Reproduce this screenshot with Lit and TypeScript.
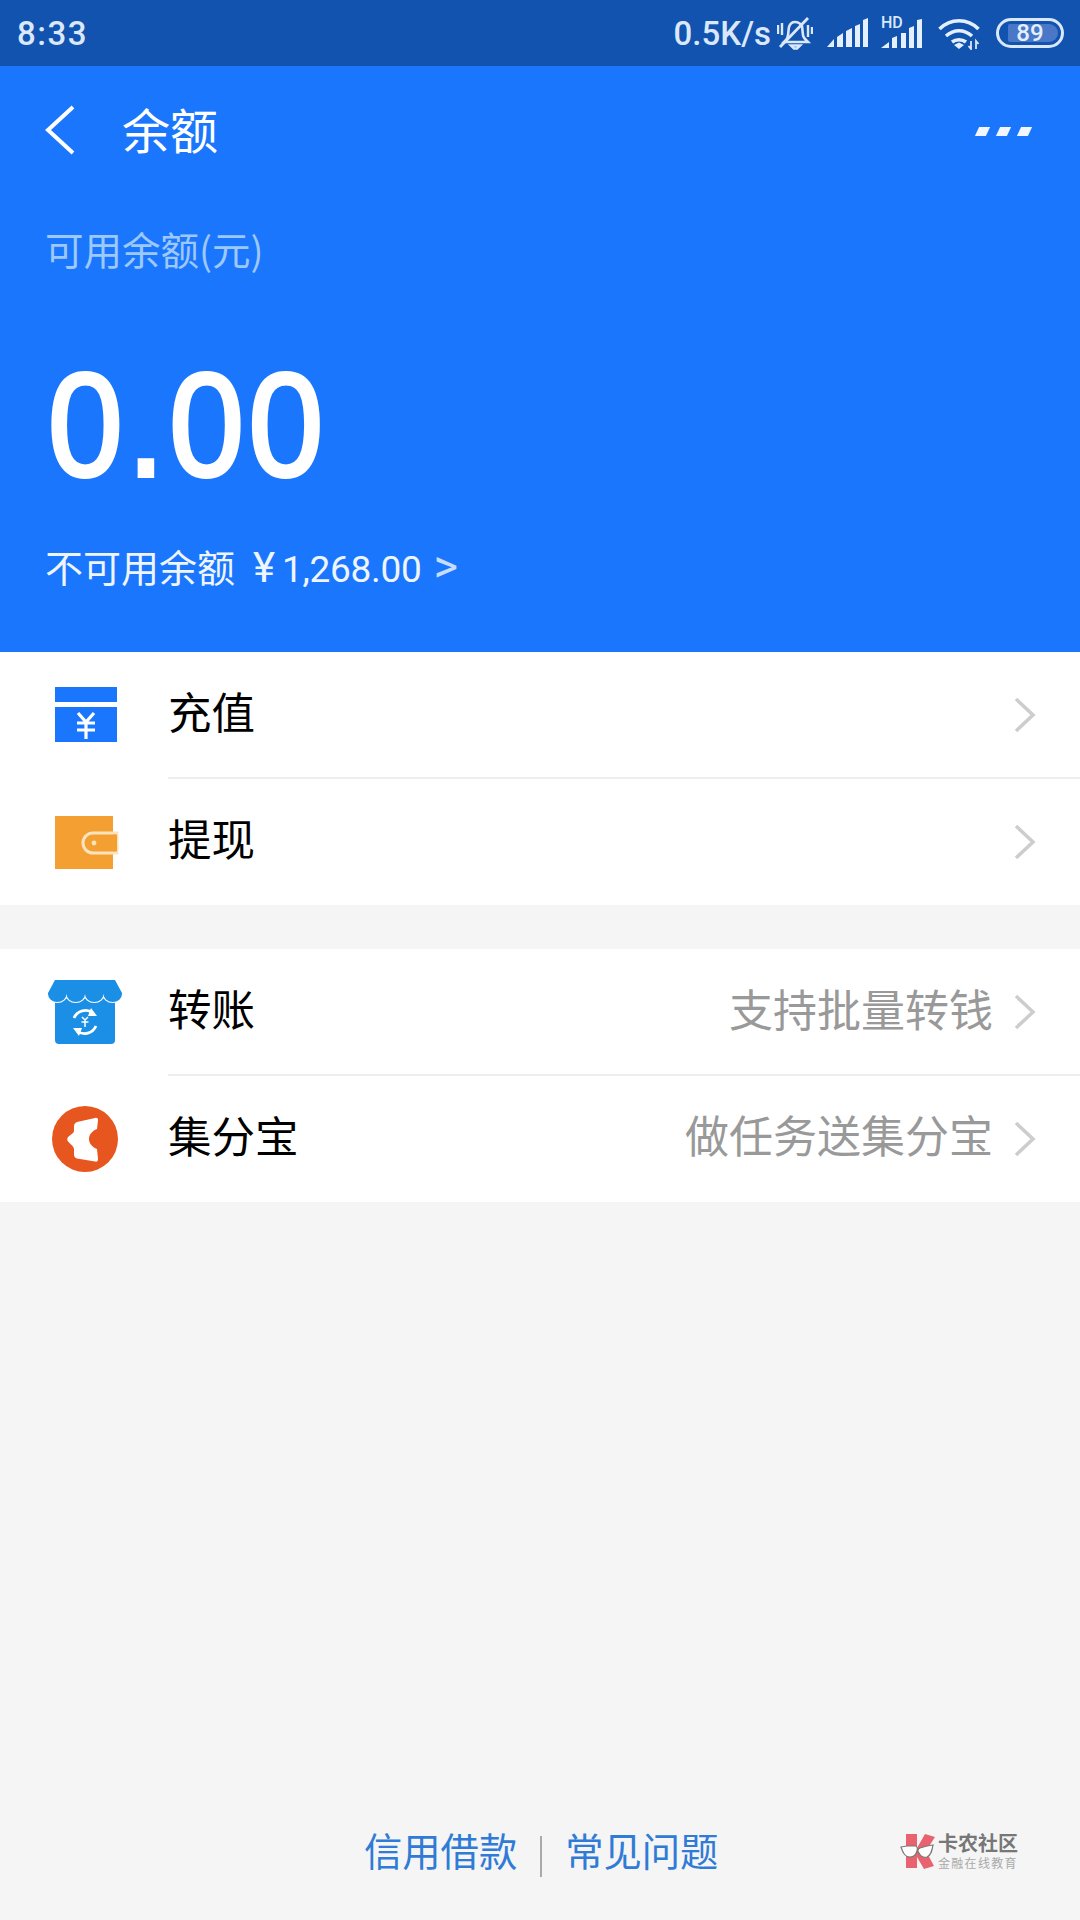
import { LitElement, css, html, nothing, svg } from 'lit'
import { customElement } from 'lit/decorators.js'

interface Row {
   icon: unknown
   label: string
   hint?: string
}

const chargeIcon = svg`
   <rect x="10" y="12" width="62" height="15" fill="#1a76fc"/>
   <rect x="10" y="32" width="62" height="35" fill="#1a76fc"/>
   <path d="M33 38l8 9 8-9M32 48h18M32 55h18M41 47v17" fill="none" stroke="#fff" stroke-width="3.2"/>
`

const walletIcon = svg`
   <rect x="10" y="14" width="58" height="53" fill="#f39f32"/>
   <path d="M72 31H48a9 9 0 0 0 0 20h24z" fill="#f39f32" stroke="#fde3bd" stroke-width="3"/>
   <rect x="68" y="32.5" width="4" height="17" fill="#f39f32"/>
   <circle cx="49" cy="41" r="2.4" fill="#fde3bd"/>
`

const shopIcon = svg`
   <rect x="10" y="22" width="60" height="50" rx="4" fill="#1b8fe6"/>
   <path d="M10 8h60l7 13v1a9.250 8 0 0 1-18.500 0 9.250 8 0 0 1-18.500 0 9.250 8 0 0 1-18.500 0 9.250 8 0 0 1-18.500 0v-1z" fill="#1b8fe6" stroke="#fff" stroke-width="2.200" paint-order="stroke"/>
   <path d="M29 46a12.500 12.500 0 0 1 19-5M51 54a12.500 12.500 0 0 1-19 5" fill="none" stroke="#fff" stroke-width="2.800"/>
   <path d="M46 36l6 8-9 0zM34 64l-6-8 9 0z" fill="#fff"/>
   <path d="M37 45l3 3 3-3M36.500 50h7M40 48v7" fill="none" stroke="#fff" stroke-width="1.500"/>
`

const pointsIcon = svg`
   <circle cx="40" cy="40" r="33" fill="#e6561e"/>
   <path d="M50 19c2-.5 3 .5 3 2l-1 9c-5 2-8 6-8 10s3 8 8 10l1 10c0 2-1 3-3 2.500l-18-3c-2-.5-3-2-3-4v-5c0-2-1-3-3-5l-3-3c-1-1.500-1-3 0-4.500l5-4c1-1 1-2 1-4v-3c0-2 1-3 3-4z" fill="#fff"/>
`

const groupA: Row[] = [
   { icon: chargeIcon, label: '充值' },
   { icon: walletIcon, label: '提现' }
]

const groupB: Row[] = [
   { icon: shopIcon, label: '转账', hint: '支持批量转钱' },
   { icon: pointsIcon, label: '集分宝', hint: '做任务送集分宝' }
]

const genRow = (row: Row) => html`
   <div class="row">
      <svg class="row-icon" viewBox="0 0 80 80" width="80" height="80">${row.icon}</svg>
      <div class="row-body">
         <span class="label">${row.label}</span>
         ${row.hint ? html`<span class="hint">${row.hint}</span>` : nothing}
         <svg class="chevron" viewBox="0 0 24 38" width="24" height="38">
            <path d="M3 3l17 16L3 35" fill="none" stroke="#cdcdcd" stroke-width="3.500"/>
         </svg>
      </div>
   </div>
`

@customElement('app-root')
export class AppRoot extends LitElement {

   render() {
      return html`
         <div class="page">
            <div class="status">
               <span class="time">8:33</span>
               <span class="speed">0.5K/s</span>
               <svg class="bell" viewBox="0 0 36 34" width="36" height="34">
                  <path d="M9 24c3-3 2-9 3-13 1-3 3-5 6-5 3 0 5 1 7 4l1 9c0 2 2 4 3 5l2 2H7zM14 29.500h9l-3 3h-3z" fill="none" stroke="#dbe8fb" stroke-width="2.600"/>
                  <path d="M3 31L31 2" stroke="#dbe8fb" stroke-width="2.800"/>
                  <path d="M1 9v9M5 7v12M31 9v12M35 11v7" stroke="#dbe8fb" stroke-width="2.400"/>
               </svg>
               <svg class="signal" viewBox="0 0 41 30" width="41" height="30">
                  <path d="M0 29l7-8v8zM10 29V19l6-4v14zM19 29V13l6-3v19zM28 29V8l5-2v23zM36 29V2l5-2v29z" fill="#e4efff"/>
               </svg>
               <div class="hd">
                  <span class="hd-label">HD</span>
                  <svg viewBox="0 0 41 30" width="41" height="30">
                     <path d="M0 29l8-6v6zM11 29V19l5-2v12zM20 29V14h5v15zM28 29V9l5-2v22zM36 29V1l5-1v29z" fill="#e4efff"/>
                  </svg>
               </div>
               <svg class="wifi" viewBox="0 0 42 34" width="42" height="34">
                  <path d="M1.500 13c11-11 28-11 39 0M8 20c8-7 18-7 26 0M14 26c4-3 10-3 14 0" fill="none" stroke="#e4efff" stroke-width="3.600"/>
                  <path d="M16 29l5-2.500 5 2.500-5 4z" fill="#e4efff"/>
                  <path d="M33 25v8l-2.500-3M38 33v-8l2.500 3" fill="none" stroke="#dbe8fb" stroke-width="1.800"/>
               </svg>
               <div class="battery">
                  <div class="battery-fill"></div>
                  <span class="battery-text">89</span>
               </div>
            </div>
            <div class="hero">
               <div class="bar">
                  <svg class="back" viewBox="0 0 30 50" width="30" height="50">
                     <path d="M28 2L3 25l25 23" fill="none" stroke="#fff" stroke-width="4"/>
                  </svg>
                  <span class="title">余额</span>
                  <div class="more"><i></i><i></i><i></i></div>
               </div>
               <div class="caption">可用余额(元)</div>
               <div class="amount">0.00</div>
               <div class="frozen">不可用余额<span class="yen">¥</span><span class="money">1,268.00</span><span class="gt">&gt;</span></div>
            </div>
            <div class="group">${groupA.map(genRow)}</div>
            <div class="group">${groupB.map(genRow)}</div>
            <div class="footer">
               <span class="link">信用借款</span>
               <span class="sep"></span>
               <span class="link">常见问题</span>
               <div class="logo">
                  <svg viewBox="0 0 36 38" width="36" height="38">
                     <path d="M7 2h11v14l8-14 10 3-9 14 8 15-10 3-7-12v11H7z" fill="#e8636f"/>
                     <path d="M2 15l6-1h8c2 0 3 2 2 5-1 4-3 6-7 6-5 0-7-4-9-10zM34 13l-6 1-7 2c-2 1-3 3-1 5 2 4 4 5 8 4 4-2 5-6 6-12z" fill="#fff" stroke="#777" stroke-width="1.200"/>
                  </svg>
                  <div class="logo-text">
                     <span class="logo-name">卡农社区</span>
                     <span class="logo-sub">金融在线教育</span>
                  </div>
               </div>
            </div>
         </div>
      `
   }

   static styles = css`
      :host {
         display: block;
         font-family: "Noto Sans CJK SC", sans-serif;
      }
      .page {
         display: flex;
         flex-direction: column;
         height: 1920px;
         background: #f5f5f5;
      }
      .status {
         display: flex;
         align-items: center;
         height: 66px;
         padding-left: 17px;
         background: #1153ae;
         color: #dbe8fb;
         font-family: Roboto, sans-serif;
         font-size: 33px;
         font-weight: 500;
      }
      .time {
         letter-spacing: 1.500px;
      }
      .speed {
         margin-left: auto;
      }
      .bell {
         margin-left: 6px;
      }
      .signal {
         margin-left: 14px;
      }
      .hd {
         position: relative;
         margin-left: 13px;
         height: 30px;
      }
      .hd-label {
         position: absolute;
         left: 0;
         top: -2px;
         font-size: 16px;
         line-height: 14px;
         font-weight: 500;
      }
      .wifi {
         margin-left: 16px;
      }
      .battery {
         position: relative;
         box-sizing: border-box;
         width: 68px;
         height: 30px;
         margin: 0 16px 0 16px;
         border: 3px solid #dbe8fb;
         border-radius: 15px;
      }
      .battery-fill {
         position: absolute;
         left: 9px;
         top: 3px;
         width: 50px;
         height: 18px;
         background: #4a78c8;
         border-radius: 2px 9px 9px 2px;
      }
      .battery-text {
         position: absolute;
         left: 0;
         right: 0;
         top: 0;
         text-align: center;
         font-size: 24px;
         line-height: 24px;
         color: #e4efff;
      }
      .hero {
         padding: 0 0 61px 45px;
         background: #1a76fc;
         color: #fff;
      }
      .bar {
         display: flex;
         align-items: center;
         height: 128px;
         padding-right: 50px;
      }
      .back {
         display: block;
      }
      .title {
         margin: 0 0 5px 47px;
         font-size: 48px;
      }
      .more {
         display: flex;
         gap: 10px;
         margin-left: auto;
         margin-top: 3px;
      }
      .more i {
         width: 11px;
         height: 9px;
         background: #f2f7ff;
         transform: skewX(-25deg);
      }
      .caption {
         margin-top: 29px;
         font-size: 38.500px;
         line-height: 50px;
         color: #9cc8fb;
      }
      .amount {
         margin: 68px 0 0 3px;
         font-family: "Liberation Sans", sans-serif;
         font-size: 146px;
         line-height: 170px;
         letter-spacing: 5px;
         -webkit-text-stroke: 4px #fff;
         transform: scaleX(0.92);
         transform-origin: left center;
      }
      .frozen {
         margin-top: 30px;
         font-size: 38px;
         line-height: 50px;
         color: #eef5ff;
      }
      .yen {
         margin: 0 7px 0 18px;
         font-family: Roboto, sans-serif;
         font-size: 42px;
         line-height: 0;
      }
      .money {
         font-family: Roboto, sans-serif;
         font-size: 37px;
         letter-spacing: -0.300px;
         line-height: 0;
      }
      .gt {
         margin-left: 12px;
         font-family: Roboto, sans-serif;
         font-size: 47px;
         line-height: 0;
         color: #c6ddfd;
      }
      .group {
         background: #fff;
         margin-bottom: 44px;
      }
      .row {
         display: flex;
         align-items: center;
         height: 126.500px;
      }
      .row-icon {
         flex: none;
         margin: 0 43px 0 45px;
      }
      .row-body {
         display: flex;
         flex: 1;
         align-items: center;
         align-self: stretch;
         padding-right: 43px;
         font-size: 43.500px;
      }
      .row + .row .row-body {
         box-shadow: 0 -2px 0 #eeeeee;
      }
      .label {
         margin-bottom: 9px;
         color: #000;
      }
      .hint {
         margin: 0 0 9px auto;
         font-size: 44px;
         color: #999;
      }
      .chevron {
         margin-left: 20px;
      }
      .label + .chevron {
         margin-left: auto;
      }
      .footer {
         display: flex;
         align-items: center;
         margin-top: auto;
         height: 86px;
         padding: 0 62px 28px 364px;
      }
      .link {
         font-size: 38.300px;
         color: #2f7bd6;
      }
      .sep {
         width: 2px;
         height: 41px;
         margin: 15px 23px 0 23px;
         background: #aaa;
      }
      .logo {
         display: flex;
         align-items: center;
         gap: 3px;
         margin: 4px 0 0 auto;
      }
      .logo-text {
         display: flex;
         flex-direction: column;
         gap: 3px;
      }
      .logo-name {
         font-size: 20px;
         line-height: 20px;
         font-weight: 700;
         color: #777;
      }
      .logo-sub {
         font-size: 12px;
         line-height: 13px;
         letter-spacing: 1.300px;
         color: #aaa;
      }
   `
}

declare global {
   interface HTMLElementTagNameMap {
      'app-root': AppRoot
   }
}
